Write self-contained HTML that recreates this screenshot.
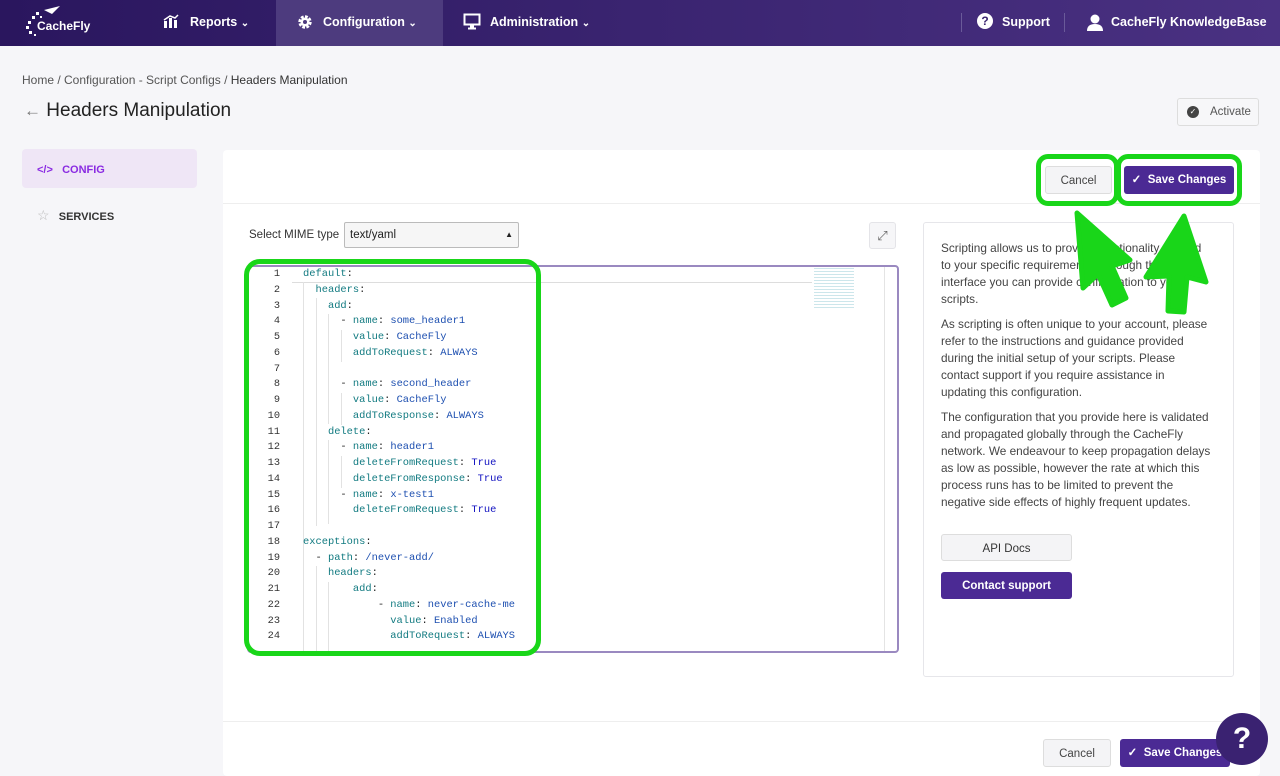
<!DOCTYPE html>
<html><head><meta charset="utf-8"><style>
*{box-sizing:border-box;margin:0;padding:0}
body{width:1280px;height:776px;overflow:hidden;background:#f6f6f9;font-family:"Liberation Sans",sans-serif;position:relative;color:#222}
.nav{position:absolute;left:0;top:0;width:1280px;height:46px;background:linear-gradient(90deg,#2a165e,#3a2470 50%,#4a3182);color:#fff;font-weight:bold;font-size:12.5px}
.nav .it{position:absolute;top:0;height:46px;line-height:45px}
.abs{position:absolute}
.card{position:absolute;left:223px;top:150px;width:1037px;height:626px;background:#fff;border-radius:4px}
.btn{position:absolute;height:28px;border-radius:3px;font-size:11.5px;line-height:28px;text-align:center}
.cancel{background:#f4f4f6;border:1px solid #ddd;color:#444}
.save{background:#4b2a94;color:#fff;font-weight:bold}
.code{position:absolute;font-family:"Liberation Mono",monospace;font-size:10.4px;line-height:15.75px;white-space:pre}
.k{color:#117a80}.v{color:#1d4fb0}.b{color:#1010c0}
.ln{position:absolute;left:249px;width:31px;text-align:right;font-family:"Liberation Mono",monospace;font-size:10.3px;line-height:15.75px;color:#333;white-space:pre}
.info p{font-size:11.8px;line-height:17px;color:#444;margin-bottom:8px}
.g{position:absolute;border:5px solid #19d619;border-radius:12px}
.guide{position:absolute;width:1px;background:#e2e2e2}
</style></head><body>
<div class="nav">
 <div class="it" style="left:22px;top:4px;height:36px">
  <svg width="70" height="36" viewBox="0 0 70 36"><g fill="#fff"><polygon points="22,6 38,2 30,10"/><rect x="14" y="8" width="3" height="3"/><rect x="10" y="12" width="3" height="3"/><rect x="6" y="17" width="3" height="3"/><rect x="4" y="22" width="3" height="3"/><rect x="7" y="27" width="3" height="3"/><rect x="12" y="30" width="2" height="2"/><rect x="18" y="12" width="2" height="2"/></g><text x="15" y="26" fill="#fff" font-size="12" font-weight="bold" font-family="Liberation Sans">CacheFly</text></svg>
 </div>
 <div class="it" style="left:163px">
  <svg class="abs" style="left:0;top:14px" width="16" height="14"><rect x="1" y="7" width="3" height="7" fill="#fff"/><rect x="6" y="4" width="3" height="10" fill="#fff"/><rect x="11" y="6" width="3" height="8" fill="#fff"/><path d="M1 6 L7 2 L12 4 L15 1" stroke="#fff" stroke-width="1.5" fill="none"/></svg>
  <span style="margin-left:27px">Reports</span> <span style="font-size:10px">&#8964;</span></div>
 <div class="it" style="left:276px;width:167px;background:#4d3b7e;padding-left:21px">
  <svg class="abs" style="left:21px;top:14px" width="16" height="16" viewBox="0 0 16 16"><circle cx="8" cy="8" r="5" fill="none" stroke="#fff" stroke-width="3.4" stroke-dasharray="2.6 1.3"/><circle cx="8" cy="8" r="4.5" fill="#fff"/><circle cx="8" cy="8" r="2" fill="#4d3b7e"/></svg>
  <span style="margin-left:26px">Configuration</span> <span style="font-size:10px">&#8964;</span></div>
 <div class="it" style="left:463px">
  <svg class="abs" style="left:0;top:13px" width="18" height="17"><rect x="1.5" y="1.5" width="15" height="10" fill="none" stroke="#fff" stroke-width="2"/><rect x="7" y="12" width="4" height="3" fill="#fff"/><rect x="5" y="14.5" width="8" height="2" fill="#fff"/></svg>
  <span style="margin-left:27px">Administration</span> <span style="font-size:10px">&#8964;</span></div>
 <div class="abs" style="left:961px;top:13px;width:1px;height:19px;background:#6a5a99"></div>
 <div class="abs" style="left:1064px;top:13px;width:1px;height:19px;background:#6a5a99"></div>
 <div class="it" style="left:977px"><span style="display:inline-block;width:16px;height:16px;border-radius:50%;background:#fff;color:#3a2470;text-align:center;line-height:16px;font-size:12px;vertical-align:middle;margin-top:-3px">?</span><span style="margin-left:9px">Support</span></div>
 <div class="it" style="left:1087px">
  <svg class="abs" style="left:0;top:14px" width="16" height="17"><circle cx="8" cy="5" r="4.5" fill="#fff"/><path d="M0 17 Q0 10 8 10 Q16 10 16 17Z" fill="#fff"/></svg>
  <span style="margin-left:24px">CacheFly KnowledgeBase</span></div>
</div>

<div class="abs" style="left:22px;top:73px;font-size:12px;color:#555">Home / Configuration - Script Configs / <span style="color:#333">Headers Manipulation</span></div>
<div class="abs" style="left:24px;top:100px;font-size:19px;color:#222"><span style="color:#777;font-size:17px">&#8592;</span> Headers Manipulation</div>
<div class="abs" style="left:1177px;top:98px;width:82px;height:28px;background:#f7f7f9;border:1px solid #ddd;border-radius:3px;font-size:11.5px;color:#555;line-height:26px;padding-left:32px">Activate
 <span class="abs" style="left:9px;top:7px;width:12px;height:12px;border-radius:50%;background:#444;color:#fff;font-size:8px;line-height:12px;text-align:center">&#10003;</span></div>

<div class="abs" style="left:22px;top:149px;width:175px;height:39px;background:#efe6f6;border-radius:4px"></div>
<div class="abs" style="left:37px;top:164px;font-size:11px;color:#8a2be2;font-weight:bold">&lt;/&gt;&nbsp;&nbsp; CONFIG</div>
<div class="abs" style="left:37px;top:207px;font-size:11px;color:#333;font-weight:bold"><span style="color:#bbb;font-size:14px;font-weight:normal">&#9734;</span>&nbsp;&nbsp; SERVICES</div>

<div class="card">
 <div class="abs" style="left:0;top:53px;width:1037px;height:1px;background:#eee"></div>
 <div class="abs" style="left:0;top:571px;width:1037px;height:1px;background:#eee"></div>
</div>
<div class="btn cancel" style="left:1045px;top:166px;width:67px">Cancel</div>
<div class="btn save" style="left:1124px;top:166px;width:110px">&#10003;&nbsp; Save Changes</div>
<div class="btn cancel" style="left:1043px;top:739px;width:68px">Cancel</div>
<div class="btn save" style="left:1120px;top:739px;width:110px">&#10003;&nbsp; Save Changes</div>

<div class="abs" style="left:249px;top:229px;font-size:11.5px;color:#333">Select MIME type</div>
<div class="abs" style="left:344px;top:222px;width:175px;height:26px;border:1px solid #bbb;border-radius:2px;background:#f6f6f6;font-size:11.5px;line-height:24px;padding-left:5px;color:#222">text/yaml<span class="abs" style="right:5px;top:0;font-size:8px">&#9650;<br></span></div>
<div class="abs" style="left:869px;top:222px;width:27px;height:27px;border:1px solid #e4e4e8;border-radius:3px;background:#f6f6f8;color:#666;font-size:13px;text-align:center;line-height:25px">&#10530;</div>

<div class="abs" style="left:247px;top:265px;width:652px;height:388px;border:2px solid #9a89c0;border-radius:4px;background:#fff"></div>
<div class="abs" style="left:884px;top:267px;width:1px;height:384px;background:#e4e4e4"></div>
<div class="abs" style="left:292px;top:282px;width:520px;height:1px;background:#ddd"></div>
<div class="guide" style="left:303px;top:282px;height:370px"></div>
<div class="guide" style="left:316px;top:298px;height:228px"></div>
<div class="guide" style="left:328px;top:314px;height:110px"></div>
<div class="guide" style="left:341px;top:330px;height:32px"></div>
<div class="guide" style="left:341px;top:393px;height:32px"></div>
<div class="guide" style="left:328px;top:440px;height:84px"></div>
<div class="guide" style="left:341px;top:456px;height:32px"></div>
<div class="guide" style="left:316px;top:566px;height:86px"></div>
<div class="guide" style="left:328px;top:582px;height:70px"></div>
<div class="abs" style="left:814px;top:268px;width:40px;height:42px;background:repeating-linear-gradient(180deg,#bfe0e6 0 1px,transparent 1px 3px);opacity:.8"></div>
<div class="ln" style="top:267px">1
2
3
4
5
6
7
8
9
10
11
12
13
14
15
16
17
18
19
20
21
22
23
24</div>
<div class="code" style="left:303px;top:267px"><span class="k">default</span>:
  <span class="k">headers</span>:
    <span class="k">add</span>:
      - <span class="k">name</span>: <span class="v">some_header1</span>
        <span class="k">value</span>: <span class="v">CacheFly</span>
        <span class="k">addToRequest</span>: <span class="v">ALWAYS</span>

      - <span class="k">name</span>: <span class="v">second_header</span>
        <span class="k">value</span>: <span class="v">CacheFly</span>
        <span class="k">addToResponse</span>: <span class="v">ALWAYS</span>
    <span class="k">delete</span>:
      - <span class="k">name</span>: <span class="v">header1</span>
        <span class="k">deleteFromRequest</span>: <span class="b">True</span>
        <span class="k">deleteFromResponse</span>: <span class="b">True</span>
      - <span class="k">name</span>: <span class="v">x-test1</span>
        <span class="k">deleteFromRequest</span>: <span class="b">True</span>

<span class="k">exceptions</span>:
  - <span class="k">path</span>: <span class="v">/never-add/</span>
    <span class="k">headers</span>:
        <span class="k">add</span>:
            - <span class="k">name</span>: <span class="v">never-cache-me</span>
              <span class="k">value</span>: <span class="v">Enabled</span>
              <span class="k">addToRequest</span>: <span class="v">ALWAYS</span></div>

<div class="abs info" style="left:923px;top:222px;width:311px;height:455px;border:1px solid #e6e6ea;border-radius:3px;padding:17px 21px 17px 17px">
 <p>Scripting allows us to provide functionality tailored to your specific requirements. Through this interface you can provide configuration to your scripts.</p>
 <p>As scripting is often unique to your account, please refer to the instructions and guidance provided during the initial setup of your scripts. Please contact support if you require assistance in updating this configuration.</p>
 <p>The configuration that you provide here is validated and propagated globally through the CacheFly network. We endeavour to keep propagation delays as low as possible, however the rate at which this process runs has to be limited to prevent the negative side effects of highly frequent updates.</p>
</div>
<div class="btn cancel" style="left:941px;top:534px;width:131px;height:27px;color:#333">API Docs</div>
<div class="btn save" style="left:941px;top:572px;width:131px;height:27px">Contact support</div>

<div class="g" style="left:244px;top:259px;width:297px;height:397px;border-radius:16px"></div>
<div class="g" style="left:1036px;top:154px;width:83px;height:52px"></div>
<div class="g" style="left:1116px;top:154px;width:126px;height:52px"></div>
<svg class="abs" style="left:0;top:0" width="1280" height="776"><g fill="#19d619" stroke="#19d619" stroke-width="5" stroke-linejoin="round">
<polygon points="1077,213 1130,260 1112,266 1126,298 1112,305 1098,274 1083,288"/>
<polygon points="1184,216 1206,282 1187,277 1184,312 1168,311 1169,276 1146,277"/></g></svg>

<div class="abs" style="left:1216px;top:713px;width:52px;height:52px;border-radius:50%;background:#3a2271;color:#fff;font-size:30px;font-weight:bold;text-align:center;line-height:52px">?</div>
</body></html>
